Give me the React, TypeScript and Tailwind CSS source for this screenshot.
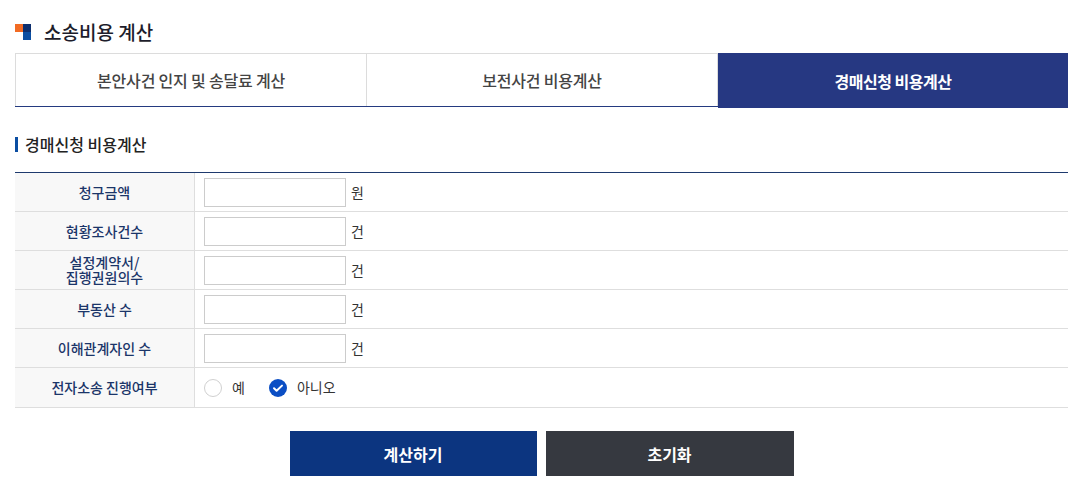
import { useState } from 'react';

const rows = [
  { label: '청구금액', unit: '원' },
  { label: '현황조사건수', unit: '건' },
  { label: '설정계약서/\n집행권원의수', unit: '건' },
  { label: '부동산 수', unit: '건' },
  { label: '이해관계자인 수', unit: '건' },
];

const tabs = ['본안사건 인지 및 송달료 계산', '보전사건 비용계산', '경매신청 비용계산'];

export default function App() {
  const [active, setActive] = useState(2);
  const [ecourt, setEcourt] = useState(false);

  return (
    <div
      className="w-[1087px] h-[497px] bg-white pl-[15px] pr-[19px] pt-[21px] text-[#222]"
      style={{ fontFamily: '"Noto Sans CJK KR", "Noto Sans", sans-serif' }}
    >
      {/* page title */}
      <div className="flex items-center h-[21px]">
        <span className="grid grid-cols-2 grid-rows-2 w-[16px] h-[16px] mt-[1px]">
          <span className="bg-[#f26b23]" />
          <span className="bg-[#0d2f6e]" />
          <span />
          <span className="bg-[#0b4ea2]" />
        </span>
        <h1 className="ml-[13px] text-[19px] font-medium leading-none text-[#1d1d2b]">소송비용 계산</h1>
      </div>

      {/* tabs */}
      <div className="mt-[11px] flex h-[54px] border-b border-[#243a80]">
        {tabs.map((t, i) => (
          <button
            key={t}
            onClick={() => setActive(i)}
            className={
              i === active
                ? 'flex-1 h-[55px] bg-[#263882] text-white text-[16px] font-bold tracking-[-0.5px]'
                : 'flex-1 border-t border-l border-[#dcdcdc] last:border-r text-[#444] text-[16px] font-medium tracking-[-0.2px]' +
                  (i === 1 ? ' border-r' : '')
            }
          >
            {t}
          </button>
        ))}
      </div>

      {/* sub title */}
      <div className="mt-[29px] flex items-center h-[16px]">
        <span className="w-[3px] h-[15px] bg-[#0b4ea2]" />
        <h2 className="ml-[7px] text-[16px] font-medium text-[#222]">경매신청 비용계산</h2>
      </div>

      {/* form table */}
      <div className="mt-[20px] border-t border-[#1e3a6e]">
        {rows.map((r) => (
          <div key={r.label} className="flex h-[39px] border-b border-[#dedede]">
            <div className="w-[180px] shrink-0 bg-[#f8f8f8] border-r border-[#dedede] flex items-center justify-center text-center whitespace-pre-line text-[14px] leading-[15px] font-medium text-[#1b3569]">
              {r.label}
            </div>
            <div className="flex items-center pl-[9px]">
              <input className="w-[142px] h-[29px] border border-[#cccccc] outline-none px-2 text-[13px]" />
              <span className="ml-[5px] text-[14px] text-[#333]">{r.unit}</span>
            </div>
          </div>
        ))}
        <div className="flex h-[40px] border-b border-[#dedede]">
          <div className="w-[180px] shrink-0 bg-[#f8f8f8] border-r border-[#dedede] flex items-center justify-center text-[14px] font-medium text-[#1b3569]">
            전자소송 진행여부
          </div>
          <div className="flex items-center pl-[9px] text-[14px] text-[#333]">
            <label className="flex items-center cursor-pointer" onClick={() => setEcourt(true)}>
              <Radio checked={ecourt} />
              <span className="ml-[10px]">예</span>
            </label>
            <label className="flex items-center ml-[24px] cursor-pointer" onClick={() => setEcourt(false)}>
              <Radio checked={!ecourt} />
              <span className="ml-[10px]">아니오</span>
            </label>
          </div>
        </div>
      </div>

      {/* buttons */}
      <div className="mt-[23px] flex justify-center gap-[9px]">
        <button className="w-[247px] h-[45px] bg-[#0c3580] text-white text-[16px] font-bold">계산하기</button>
        <button className="w-[248px] h-[45px] bg-[#363940] text-white text-[16px] font-bold">초기화</button>
      </div>
    </div>
  );
}

function Radio({ checked }: { checked: boolean }) {
  if (checked) {
    return (
      <svg width="18" height="18" viewBox="0 0 18 18">
        <circle cx="9" cy="9" r="9" fill="#0b4ec4" />
        <path d="M5 9.3l2.6 2.5L13 6.6" fill="none" stroke="#fff" strokeWidth="2" strokeLinecap="round" strokeLinejoin="round" />
      </svg>
    );
  }
  return (
    <svg width="18" height="18" viewBox="0 0 18 18">
      <circle cx="9" cy="9" r="8.5" fill="#fff" stroke="#d0d0d0" />
    </svg>
  );
}
